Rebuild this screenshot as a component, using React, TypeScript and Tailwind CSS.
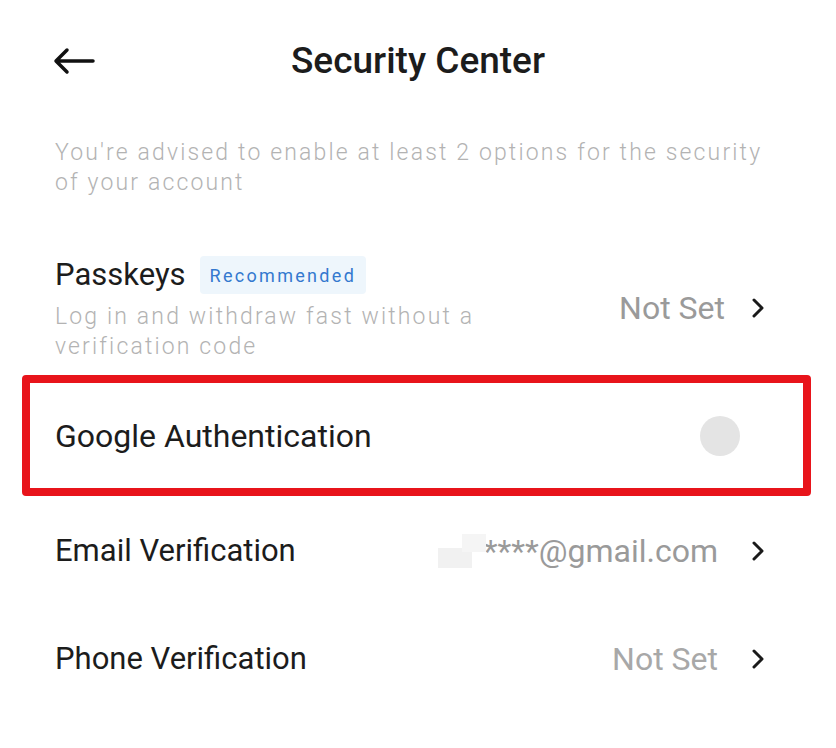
function Chevron() {
  return (
    <svg width="16" height="24" viewBox="0 0 16 24" className="shrink-0">
      <polyline
        points="4,4 12,12 4,20"
        fill="none"
        stroke="#1a1a1a"
        strokeWidth="3"
        strokeLinecap="round"
        strokeLinejoin="round"
      />
    </svg>
  );
}

function BackArrow() {
  return (
    <svg width="44" height="30" viewBox="0 0 44 30" className="absolute left-[52px] top-[46px]">
      <path
        d="M41 15H5M15 4L4 15l11 11"
        fill="none"
        stroke="#111"
        strokeWidth="3.5"
        strokeLinecap="round"
        strokeLinejoin="round"
      />
    </svg>
  );
}

function App() {
  return (
    <main
      className="w-[836px] h-[748px] bg-white text-[#1c1c1c] overflow-hidden"
      style={{ fontFamily: 'Roboto, "Liberation Sans", sans-serif' }}
    >
      <header className="relative h-[122px] flex items-center justify-center">
        <BackArrow />
        <h1 className="text-[37px] font-medium">Security Center</h1>
      </header>

      <p className="px-[55px] pr-[60px] mt-[16px] text-[23px] leading-[30px] tracking-[2.15px] font-light text-[#b3b3b3]">
        You're advised to enable at least 2 options for the security of your
        account
      </p>

      <div className="mt-[46px] px-[55px] pr-[70px] flex items-center justify-between h-[128px]">
        <div className="flex flex-col -mt-[2px]">
          <div className="flex items-center gap-[14px]">
            <span className="text-[31px]">Passkeys</span>
            <span className="bg-[#eef6fc] text-[#3479cf] text-[18px] tracking-[2.3px] px-[10px] h-[38px] flex items-center rounded-[4px]">
              Recommended
            </span>
          </div>
          <p className="text-[23px] leading-[30px] tracking-[2.15px] font-light text-[#b3b3b3] mt-[4px] w-[440px]">
            Log in and withdraw fast without a verification code
          </p>
        </div>
        <div className="flex items-center gap-[25px] text-[32px] text-[#9a9a9a]">
          <span>Not Set</span>
          <Chevron />
        </div>
      </div>

      <div className="ml-[22px] mr-[25px] mt-[3px] h-[121px] border-[8px] border-[#e8141b] rounded-[4px] pl-[25px] pr-[63px] flex items-center justify-between">
        <span className="text-[32px]">Google Authentication</span>
        <span className="w-[40px] h-[40px] rounded-full bg-[#e4e4e4]" />
      </div>

      <div className="h-[110px] px-[55px] pr-[70px] flex items-center justify-between">
        <span className="text-[31px]">Email Verification</span>
        <div className="flex items-center gap-[32px]">
          <div className="flex items-center">
            <div className="relative w-[50px] h-[34px] mr-[-4px]">
              <span className="absolute left-0 top-[14px] w-[34px] h-[20px] bg-[#f1f1f1]" />
              <span className="absolute left-[24px] top-[0px] w-[24px] h-[18px] bg-[#f5f5f5]" />
            </div>
            <span className="text-[32px] text-[#9a9a9a]">****@gmail.com</span>
          </div>
          <Chevron />
        </div>
      </div>

      <div className="h-[106px] px-[55px] pr-[70px] flex items-center justify-between">
        <span className="text-[31px]">Phone Verification</span>
        <div className="flex items-center gap-[32px] text-[32px] text-[#a8a8a8]">
          <span>Not Set</span>
          <Chevron />
        </div>
      </div>
    </main>
  );
}

export default App;
